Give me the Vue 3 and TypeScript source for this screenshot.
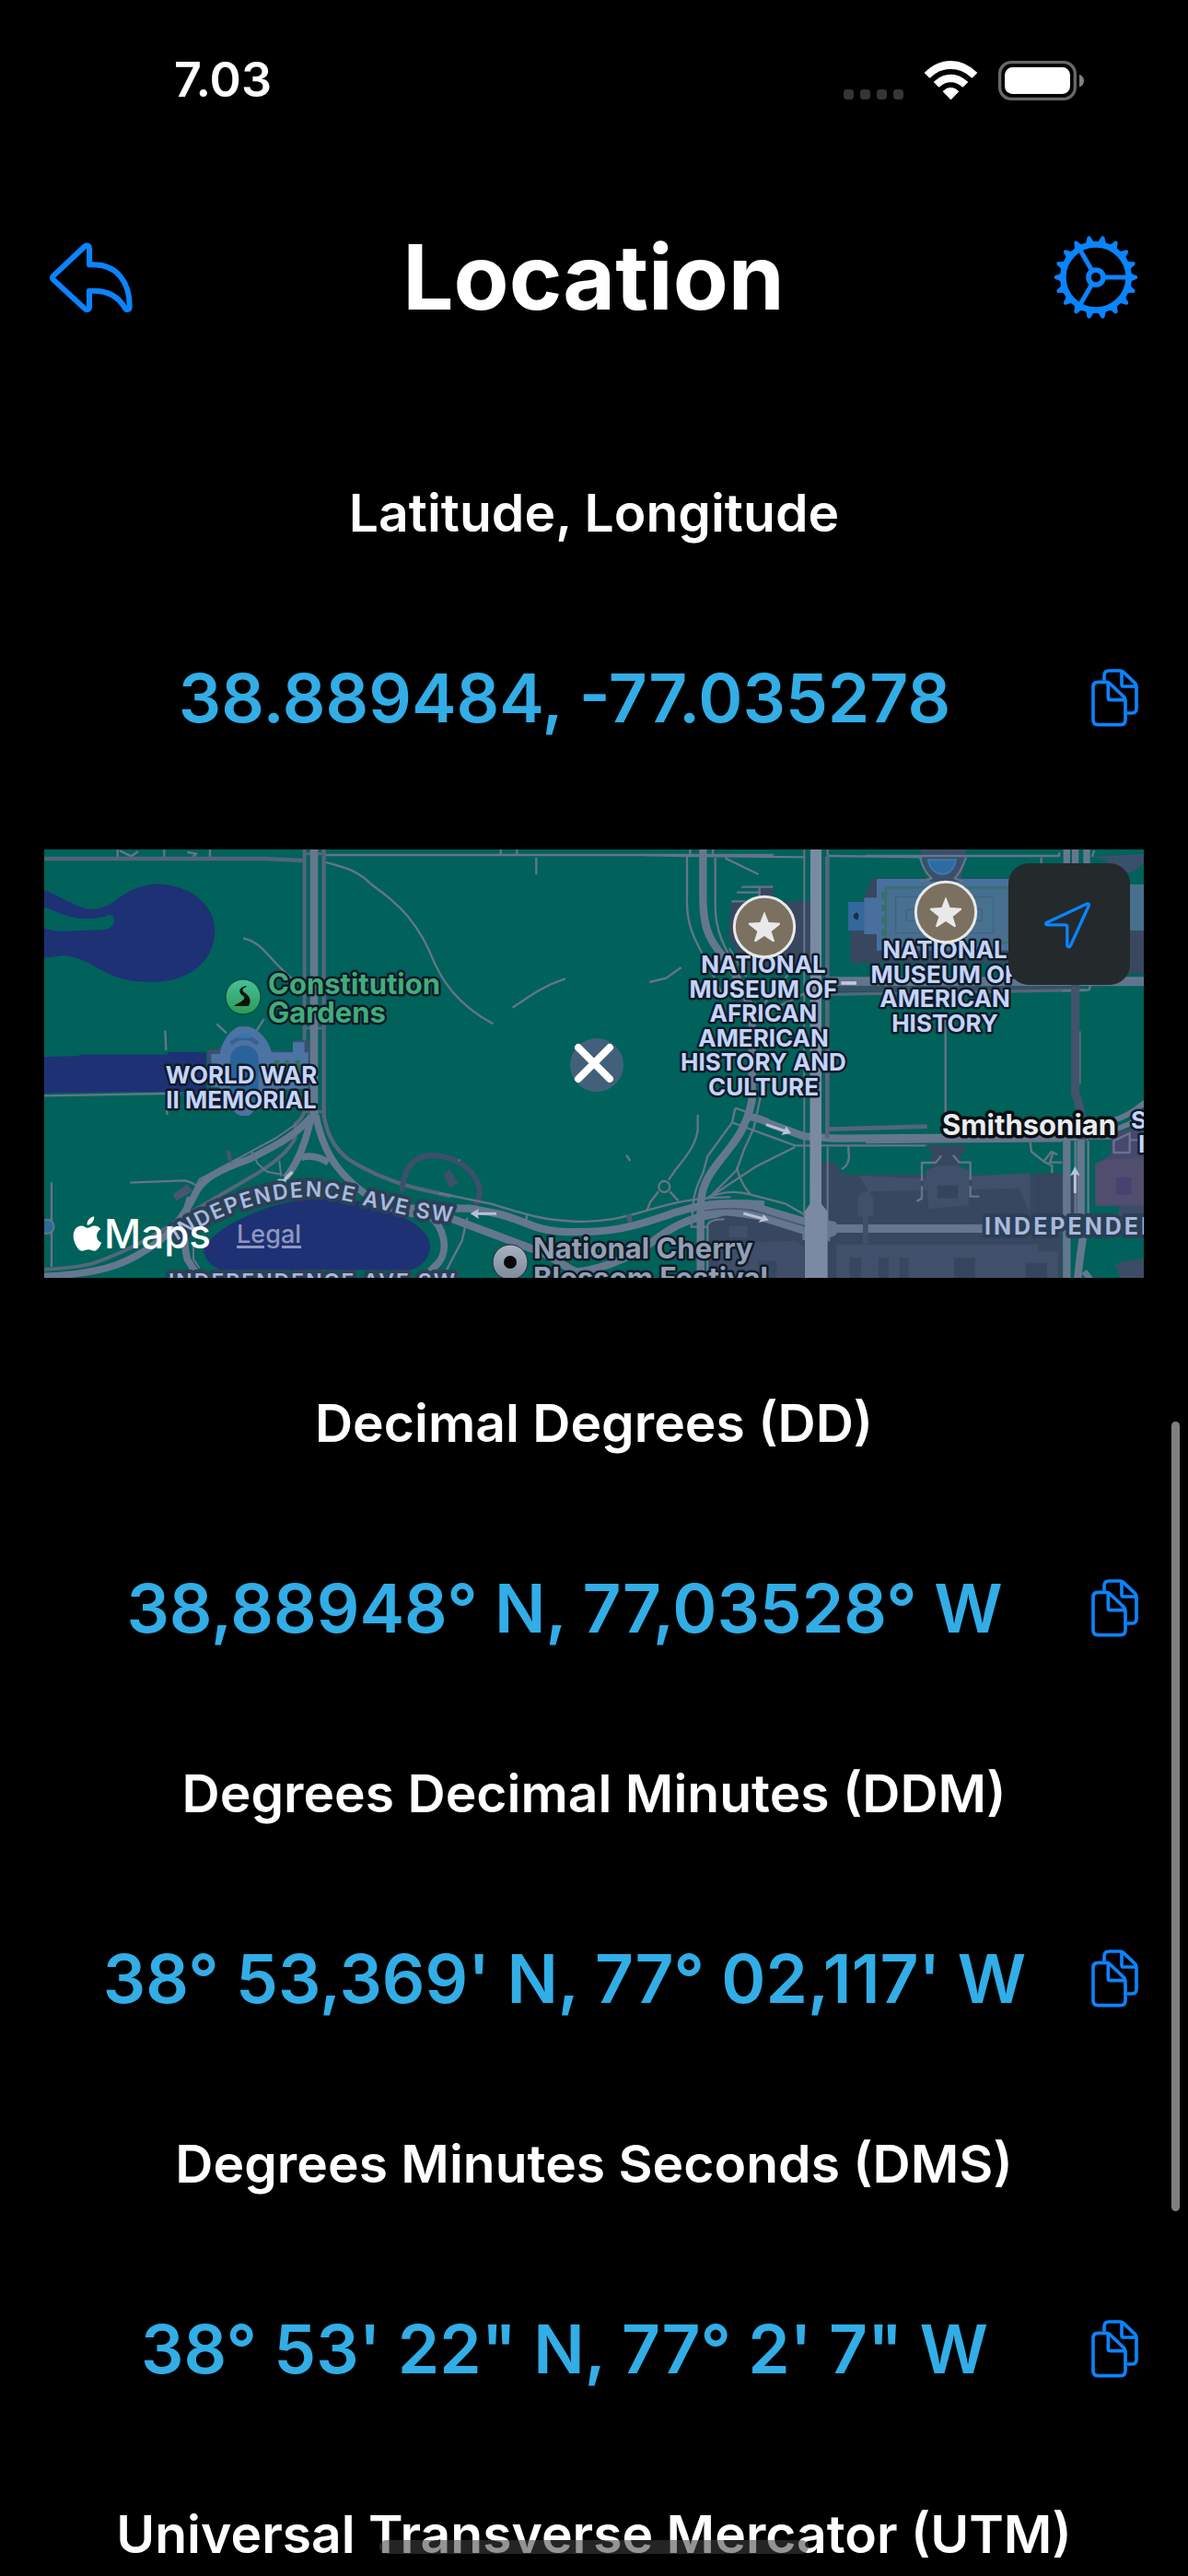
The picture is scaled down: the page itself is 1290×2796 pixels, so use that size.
<script setup lang="ts">
interface Coordinate {
  title: string
  value: string
}

const latLong: Coordinate = { title: 'Latitude, Longitude', value: '38.889484, -77.035278' }

const formats: Coordinate[] = [
  { title: 'Decimal Degrees (DD)', value: '38,88948° N, 77,03528° W' },
  { title: 'Degrees Decimal Minutes (DDM)', value: "38° 53,369' N, 77° 02,117' W" },
  { title: 'Degrees Minutes Seconds (DMS)', value: '38° 53\' 22" N, 77° 2\' 7" W' },
]

const teeth: number[] = Array.from({ length: 18 }, (_, i) => i * 20)
const spokes: number[] = [0, 120, 240]

const africanMuseum = ['NATIONAL', 'MUSEUM OF', 'AFRICAN', 'AMERICAN', 'HISTORY AND', 'CULTURE']
const americanMuseum = ['NATIONAL', 'MUSEUM OF', 'AMERICAN', 'HISTORY']
const starPath =
  'M0 -50 L14 -15 L50 -13 Q53 -9 49 -6 L23 15 L33 46 Q31 50 27 48 L0 30 L-27 48 Q-31 50 -33 46 L-23 15 L-49 -6 Q-53 -9 -50 -13 L-14 -15 Z'

function copy(text: string): void {
  navigator.clipboard?.writeText(text)
}
</script>

<template>
  <div class="screen">
    <svg class="defs" aria-hidden="true">
      <symbol id="copy-icon" viewBox="72 75 159 195">
        <g fill="none" stroke="#0a84ff" stroke-width="11" stroke-linejoin="round">
          <path d="M117 116V100Q117 84 133 84H168Q175 84 180 89L217 124Q222 129 222 136V206Q222 222 206 222H192" />
          <path d="M174 86V128Q174 135 181 135H220" />
          <path d="M97 121H124Q131 121 136 126L180 168Q186 174 186 181V244Q186 260 170 260H97Q81 260 81 244V137Q81 121 97 121Z" />
          <path d="M130 123V172Q130 179 137 179H184" />
        </g>
      </symbol>
    </svg>

    <div class="status">
      <span class="time">7.03</span>
      <svg class="status-icons" viewBox="105 39 789 138" aria-hidden="true">
        <g fill="#353535">
          <rect x="108" y="138" width="33" height="33" rx="11" />
          <rect x="162" y="138" width="33" height="33" rx="11" />
          <rect x="216" y="138" width="33" height="33" rx="11" />
          <rect x="270" y="138" width="33" height="33" rx="11" />
        </g>
        <g fill="#fff">
          <path d="M371 84Q409 45 457 45T544 84L529 99Q526 102 523 99Q495 72 457 72T392 99Q389 102 386 99Z" />
          <path d="M401 114Q427 89 457 89T514 114L499 129Q496 132 493 129Q477 115 457 115T422 129Q419 132 416 129Z" />
          <path d="M431 145Q443 132 457 132T484 145L461 169Q457 173 454 169Z" />
        </g>
        <rect x="617" y="50" width="245" height="119" rx="37" fill="none" stroke="#686868" stroke-width="10" />
        <rect x="633" y="66" width="213" height="87" rx="25" fill="#fff" />
        <path d="M876 89Q891 95 891 110T876 130Z" fill="#808080" />
      </svg>
    </div>

    <header class="header">
      <button class="icon-button" aria-label="Back">
        <svg class="header-icon" viewBox="66 72 276 276" aria-hidden="true">
          <path
            d="M81 205L181 111Q189 104 196 109Q198 112 198 116V169H212C287 169 329 225 329 303V308Q328 315 322 315Q317 315 314 310C293 272 259 254 212 254H198V308Q197 314 191 315Q186 315 181 310L81 218Q75 212 81 205Z"
            fill="none" stroke="#0a84ff" stroke-width="18" stroke-linejoin="round"
          />
        </svg>
      </button>
      <h1 class="title">Location</h1>
      <button class="icon-button" aria-label="Settings">
        <svg class="header-icon" viewBox="70 74 276 276" aria-hidden="true">
          <g transform="translate(208 212)" stroke="#0a84ff" fill="none">
            <circle r="107" stroke-width="20" />
            <circle r="24" stroke-width="17" />
            <path v-for="a in spokes" :key="`s${a}`" d="M28 0H104" stroke-width="15" :transform="`rotate(${a})`" />
            <path
              v-for="a in teeth" :key="`t${a}`" d="M112 -16Q120 -9 132 -6Q140 0 132 6Q120 9 112 16Z"
              fill="#0a84ff" stroke="none" :transform="`rotate(${a})`"
            />
          </g>
        </svg>
      </button>
    </header>

    <main class="content">
      <section class="entry">
        <h2 class="entry-title">{{ latLong.title }}</h2>
        <div class="entry-row">
          <p class="value">{{ latLong.value }}</p>
          <button class="copy" :aria-label="`Copy ${latLong.title}`" @click="copy(latLong.value)">
            <svg class="copy-icon" aria-hidden="true"><use href="#copy-icon" /></svg>
          </button>
        </div>
      </section>

      <div class="map">
        <svg class="map-canvas" viewBox="0 0 1194 465" preserveAspectRatio="xMidYMid slice" role="img" aria-label="Map of the National Mall">
          <defs>
            <linearGradient id="park" x1="0" y1="0" x2="0" y2="1">
              <stop offset="0" stop-color="#47c19a" /><stop offset="1" stop-color="#2c9a56" />
            </linearGradient>
            <linearGradient id="event" x1="0" y1="0" x2="0" y2="1">
              <stop offset="0" stop-color="#a9b3c1" /><stop offset="1" stop-color="#7c8899" />
            </linearGradient>
            <path id="avenue" d="M144 425C190 396 236 378 292 377C340 379 380 400 450 405" />
          </defs>
          <rect width="1194" height="465" fill="#00625a" />

          <g transform="translate(-8 -12) scale(.33333)" fill="none" stroke-linejoin="round">
            <!-- water -->
            <g fill="#1e3175">
              <path d="M0 160C90 190 130 230 180 230C260 228 270 160 380 149C500 145 580 220 580 300C578 400 500 468 370 468C210 468 190 390 90 382L0 392V278C30 300 60 302 80 302L225 297C258 290 262 250 236 248C190 270 120 262 90 250L0 214Z" />
              <path d="M0 711L138 709V704H426V695H552V825H290L0 830Z" />
              <path d="M545 1330C590 1270 670 1230 760 1200C860 1170 1000 1160 1100 1195C1220 1235 1280 1280 1281 1330C1280 1370 1250 1395 1220 1405H600C550 1385 540 1350 545 1330Z" />
            </g>

            <!-- north-west paths -->
            <g stroke="#667489" stroke-width="7">
              <path d="M263 36V62M415 36V62M564 36V62M270 40L308 58L330 42M490 45L520 50L508 60" />
              <path d="M940 54H1510L2400 54" />
              <path d="M942 78C1000 95 1040 100 1090 150C1190 220 1240 280 1280 370C1320 470 1370 540 1487 604" />
              <path d="M672 325C740 340 750 390 830 455M418 626L421 690M586 604L618 634M740 588L716 626" />
              <path d="M24 838L410 831H470M424 880V900M304 1121L480 1114Q500 1116 525 1134M48 1120V1395" />
              <path d="M1550 551C1610 510 1650 480 1721 457M1996 468L2050 455L2099 420" />
              <path d="M1511 36V54M1564 36V54M1627 62V117" />
            </g>
            <path d="M0 66H740L868 72" stroke="#53637a" stroke-width="14" />

            <!-- 17th street -->
            <g stroke="#55667b">
              <path d="M872 36V890Q862 915 842 930V975C820 1020 780 1050 720 1090L480 1230C360 1310 280 1350 180 1385Q120 1400 0 1405" stroke-width="12" />
              <path d="M935 36V900C945 970 980 1030 1040 1060C1110 1100 1180 1125 1240 1140L1350 1165" stroke-width="13" />
              <path d="M868 50H940M868 618H940M870 890H940" stroke-width="9" />
            </g>
            <path d="M903 36V905" stroke="#65778e" stroke-width="26" />
            <g stroke="#65778e" stroke-width="23">
              <path d="M895 905C840 970 780 1000 690 1045C590 1080 540 1110 520 1150C490 1210 450 1270 400 1310C320 1370 240 1420 0 1427" />
              <path d="M895 900C880 980 850 1060 810 1105M908 900C930 1010 970 1080 1060 1150C1120 1200 1180 1215 1240 1225" />
              <path d="M860 1040Q900 1025 950 1055M500 1170C480 1220 475 1310 490 1370L515 1410" />
              <path d="M1280 1230C1330 1270 1340 1340 1310 1380L1280 1410" />
            </g>
            <g stroke="#667489" stroke-width="6">
              <path d="M845 930L780 975L530 1110L515 1140M700 1020L720 1060L750 1085L800 1095M790 1050L796 1100M510 1320V1370L530 1400" />
            </g>
            <path d="M785 1115H812M808 1110L832 1086" stroke="#b7c2cf" stroke-width="11" />
            <path d="M616 1012L632 1022L636 1056L622 1046ZM442 1160L490 1126L508 1148L455 1180Z" fill="#465570" />
            <circle cx="33" cy="1264" r="23" fill="#2e6c92" stroke="#667489" stroke-width="6" />

            <!-- war memorial -->
            <path d="M556 688H592L640 625H720L764 690L840 695V658H888V820H720L700 900H650L600 810H556Z" fill="#3a5070" />
            <path d="M568 702H596C605 650 640 615 662 613H690C730 625 755 660 765 697H834V664H872V697H884V815H745C740 860 710 885 690 903H662C625 880 600 850 594 810H568Z" fill="#4c73a3" />
            <rect x="630" y="674" width="92" height="200" rx="45" fill="#29639a" />
            <path d="M632 668Q676 630 720 668" stroke="#3b5f8f" stroke-width="14" />
            <path d="M656 644H694" stroke="#2f79b5" stroke-width="12" />
            <path d="M774 722H790V770H774ZM808 722H822V770H808ZM842 722H858V770H842Z" fill="#2f7358" />
          </g>

          <g transform="translate(352 -12) scale(.33333)" fill="none" stroke-linejoin="round">
            <!-- ellipse and independence avenue, west -->
            <path d="M110 1150C115 1070 150 1032 210 1032C300 1035 365 1100 363 1155Q360 1190 335 1215" stroke="#3c506b" stroke-width="18" />
            <path d="M243 1092L264 1076L292 1122L266 1139Z" fill="#3d5069" />
            <g stroke="#667489" stroke-width="7">
              <path d="M230 1155L400 1190C500 1220 560 1240 640 1245C760 1255 830 1235 920 1208C990 1188 1050 1170 1180 1168" />
              <path d="M518 1222L512 1250M295 1045L297 1050M322 1235L305 1310L255 1405M840 1031L853 1050" />
              <path d="M1073 900V950C1065 1000 1040 1030 1000 1080L978 1112M945 1150L918 1185L908 1210M982 1150L1010 1180" />
              <circle cx="964" cy="1134" r="18" />
            </g>
            <path d="M840 1225H858V1250H845Z" fill="#4b5a71" />
            <g stroke="#65778e">
              <path d="M130 1205H330L420 1222C500 1240 540 1275 620 1280C820 1290 900 1250 1000 1218C1100 1185 1180 1185 1290 1192" stroke-width="25" />
              <path d="M250 1230L530 1335C590 1350 640 1400 680 1412C780 1400 880 1350 930 1310C980 1270 1050 1228 1150 1222H1240" stroke-width="25" />
            </g>
            <path d="M350 1222H417" stroke="#b9bfd6" stroke-width="9" />
            <path d="M332 1222L360 1206L356 1222L360 1239Z" fill="#b9bfd6" />
          </g>

          <g transform="translate(652 -12) scale(.33333)" fill="none" stroke-linejoin="round">
            <!-- museum grounds and southern blocks -->
            <g fill="#37475f">
              <path d="M282 205H375V160H418V205H540V430H330L274 320Z" />
              <path d="M575 1055H620L645 1095H2000V1440H575ZM205 1245L300 1215H400L525 1290V1440H205Z" />
              <path d="M743 130H1400V405H670V290Z" />
            </g>
            <path d="M240 1320L490 1310L520 1330V1440H430V1375H370V1440H240Z" fill="#404e69" />
            <path d="M274 1262H335V1300H274Z" fill="#414f68" />

            <g stroke="#667489" stroke-width="7">
              <path d="M0 54L140 57L520 61M600 57L920 61" />
              <path d="M148 36V54M222 36V60M138 60V190C135 260 150 300 165 330L260 520M230 62V220C230 300 260 360 300 420M262 64L371 117" />
              <path d="M316 158H418M374 160V190M300 176H372M283 205H330M276 358L330 450M330 600L520 505M380 550L470 440" />
              <path d="M520 36V1260M596 36V60M596 1005V1300" stroke-width="6" />
              <path d="M295 878L345 895M295 878L285 925L205 1035L190 1090Q160 1150 158 1190L152 1265H205M285 925L490 1000H920M378 840L355 945L325 1010L300 1080L220 1160" />
              <path d="M490 1005L360 1070L240 1150L205 1170M300 1070Q310 1120 345 1160M210 1168Q280 1140 345 1160L460 1190L520 1225M205 1440V1260Q210 1240 260 1240" />
              <path d="M664 1002V1020Q672 1060 642 1077M887 1182L905 1170" />
            </g>
            <g stroke="#65778e" stroke-width="25">
              <path d="M190 36V190C190 260 200 310 230 350C290 430 345 510 350 600V850Q340 900 325 930C300 1000 220 1060 195 1130Q182 1160 182 1220V1440" />
              <path d="M335 905Q380 912 410 930L520 970L620 977L2000 968" />
              <path d="M180 1205Q260 1180 360 1200L530 1250" />
              <path d="M180 1215Q260 1210 370 1230L530 1280" />
            </g>
            <path d="M195 1212Q270 1200 350 1210L520 1262" stroke="#4b5a70" stroke-width="5" />
            <path d="M595 60V975M600 947L920 938" stroke="#55657a" stroke-width="14" />
            <path d="M600 455H2000" stroke="#65778e" stroke-width="8" />
            <path d="M600 470H2000" stroke="#62748c" stroke-width="22" />
            <path d="M600 490H1400" stroke="#3d4d66" stroke-width="16" />
            <path d="M600 508L1436 494" stroke="#55657a" stroke-width="10" />
            <path d="M540 36H576V1190L596 1215V1440H522V1215L538 1190Z" fill="#7a8aa2" />
            <path d="M596 1245Q625 1245 627 1257H900L2000 1256V1284H627Q620 1300 596 1298Z" fill="#65778e" />
            <path d="M518 1290V1308M600 1290V1312" stroke="#65778e" stroke-width="8" />
            <path d="M640 471H690" stroke="#c3c9da" stroke-width="11" />
            <path d="M396 932L455 952M322 1221L382 1237" stroke="#b9c2d6" stroke-width="9" />
            <path d="M461 937L477 960L445 966L454 953ZM387 1224L404 1243L371 1251L381 1238Z" fill="#b9c2d6" />
            <g fill="#40506a">
              <path d="M698 1098L895 1108L1255 1090V1220L1220 1140L730 1150Z" />
              <path d="M710 1150H735L745 1175V1230H728V1320H711V1230H695V1170Z" />
              <path d="M625 1322H1280V1345H1347V1440H860V1365H830V1440H795V1365H762V1440H705V1365H668V1440H625Z" />
            </g>

            <!-- american history museum -->
            <path d="M664 208H715V193H756V132H1200V365H756V312H715V300H664Z" fill="#486f9d" />
            <rect x="664" y="208" width="51" height="92" fill="#34679c" />
            <rect x="786" y="160" width="400" height="180" fill="#486f91" stroke="#377167" stroke-width="7" />
            <rect x="818" y="190" width="318" height="118" fill="#48708f" stroke="#3f6484" stroke-width="4" />
            <rect x="853" y="232" width="246" height="36" stroke="#3f6484" stroke-width="4" />
            <path d="M777 175V350" stroke="#30725f" stroke-width="9" stroke-dasharray="22 18" />
            <path d="M690 240L698 250L694 266L682 260L680 250Z" fill="#1d2c40" />
          </g>

          <g transform="translate(892 -12) scale(.33333)" fill="none" stroke-linejoin="round">
            <!-- 14th and 12th streets -->
            <path d="M174 30H330L310 140H210Z" fill="#39506c" />
            <path d="M204 70H294C290 100 270 116 250 116S208 100 204 70Z" fill="#2f6ba3" stroke="#4277a6" stroke-width="6" />
            <path d="M735 60L906 50V80L870 110H820L780 70Z" fill="#39506c" />
            <path d="M840 150H910V300H840Z" fill="#47708f" />
            <path d="M855 300H910V440H855Z" fill="#39485f" />
            <g stroke="#667489" stroke-width="7">
              <path d="M0 57H630V46M177 62Q190 110 215 130L176 140M327 62Q310 110 290 130L316 140M572 62V90M738 60Q740 50 745 40" />
              <path d="M260 590V900L264 990M0 990L640 985M536 990L540 1020L580 1052L607 1066V1102M580 1052L605 1020L625 1030M640 1055H600L612 1020M725 985V1230" />
              <path d="M730 475V488Q730 494 720 494L640 496M697 628V800" />
            </g>
            <path d="M192 1000H324V1020L308 1035V1070H215V1020Z" fill="#37475f" />
            <path d="M196 1080L240 1066H300L335 1080V1195L205 1206Z" fill="#40506a" />
            <rect x="233" y="1130" width="67" height="42" fill="#34445c" />
            <path d="M247 1033L228 1056H183V1172L167 1181M284 1031L305 1055H341V1166H370" stroke="#667489" stroke-width="7" />
            <path d="M183 1115V1132M341 1112V1132" stroke="#37475f" stroke-width="9" />
            <path d="M288 1366H356V1440H288ZM521 1382H591V1440H521ZM555 1090H636V1230H555Z" fill="#35455d" />
            <path d="M683 475V830Q700 870 705 930V990" stroke="#43536b" stroke-width="27" />
            <path d="M712 1000V1235H640V1440H906V980H725Z" fill="#00625a" />
            <g stroke="#65778e">
              <path d="M655 36V82M720 36V82M683 36V82" stroke-width="22" />
              <path d="M800 920Q850 910 910 860M800 950Q870 935 910 890" stroke-width="18" />
              <path d="M655 975V1440M701 980V1225L710 1290Q700 1340 690 1440" stroke-width="25" />
              <path d="M683 985V1230M725 985V1220" stroke-width="7" />
            </g>
            <path d="M712 1410L735 1440" stroke="#65778e" stroke-width="20" />
            <path d="M800 960L870 945L910 960V1230H825V1197H748V1060L800 1030Z" fill="#474770" />
            <path d="M748 1060L785 1045L906 1040V1195H748Z" fill="#514d6e" />
            <rect x="815" y="1104" width="51" height="56" fill="#454370" />
            <path d="M808 985L860 960V1023H808ZM860 982H910" stroke="#667489" stroke-width="7" />
            <path d="M826 1198H910V1235H826ZM812 1385L906 1366V1440H832Z" fill="#3c4c66" />
            <path d="M682 1155V1090" stroke="#b9c2d6" stroke-width="9" />
            <path d="M682 1068L698 1099L682 1093L666 1099Z" fill="#b9c2d6" />
          </g>

          <!-- labels -->
          <g class="poi-green label">
            <text x="243" y="157">Constitution</text>
            <text x="243" y="188">Gardens</text>
          </g>
          <g class="poi label" text-anchor="middle">
            <text x="214" y="254">WORLD WAR</text>
            <text x="214" y="281">II MEMORIAL</text>
            <text v-for="(line, i) in africanMuseum" :key="`af${i}`" x="781" :y="134 + Math.round(i * 26.5)">{{ line }}</text>
            <text v-for="(line, i) in americanMuseum" :key="`am${i}`" x="978" :y="118 + Math.round(i * 26.5)">{{ line }}</text>
          </g>
          <g class="poi label">
            <text x="1180" y="303">S</text>
            <text x="1188" y="329">I</text>
          </g>
          <g class="street label">
            <text><textPath href="#avenue">INDEPENDENCE AVE SW</textPath></text>
            <text x="135" y="477">INDEPENDENCE AVE SW</text>
          </g>
          <text class="street street-bold label" x="1021" y="418">INDEPENDENCE</text>
          <g class="event label">
            <text x="531" y="444">National Cherry</text>
            <text x="531" y="476">Blossom Festival</text>
          </g>
          <text class="station label" x="975" y="310">Smithsonian</text>

          <!-- pins -->
          <circle cx="216" cy="160" r="19" fill="url(#park)" stroke="#0b3b35" stroke-width="1" />
          <path d="M219 148C210 150 211 156 216 159C221 163 211 166 206 170H222C226 163 222 158 217 155C214 152 216 150 220 149Z" fill="#08120f" />
          <circle cx="506" cy="448" r="19" fill="url(#event)" stroke="#1d2a36" stroke-width="1" />
          <circle cx="506" cy="448" r="7" fill="#08090c" />
          <g v-for="pin in [{ x: 782, y: 84 }, { x: 979, y: 68 }]" :key="pin.x" :transform="`translate(${pin.x} ${pin.y}) scale(.33333)`">
            <circle r="98" fill="#7c7160" stroke="#e9e9ea" stroke-width="9" />
            <path :d="starPath" fill="#e9e9ea" />
          </g>
          <circle cx="600" cy="234" r="29" fill="#43607a" />
          <path d="M580 215L614 249M614 215L580 249" stroke="#fff" stroke-width="8" stroke-linecap="round" />
        </svg>

        <div class="attribution">
          <svg class="apple" viewBox="118 1222 94 116" aria-hidden="true">
            <path
              d="M186 1225C188 1238 178 1252 164 1253C162 1240 172 1228 186 1225ZM165 1262C172 1262 176 1255 188 1255C197 1255 203 1260 207 1265C189 1277 191 1301 210 1309C204 1323 196 1335 187 1335C179 1335 176 1331 168 1331C159 1331 155 1335 148 1335C136 1335 120 1310 120 1287C120 1266 133 1255 146 1255C154 1255 160 1262 165 1262Z"
              fill="#fff"
            />
          </svg>
          <span class="brand">Maps</span>
          <a class="legal" href="#legal">Legal</a>
        </div>

        <button class="locate" aria-label="Centre on my location">
          <svg class="locate-icon" viewBox="587 206 152 152" aria-hidden="true">
            <path
              d="M588 276L719 215Q726 213 725 221L666 350Q663 356 658 354Q655 353 655 349V290Q655 283 648 283H592Q586 283 586 280T588 276Z"
              fill="none" stroke="#0a84ff" stroke-width="10" stroke-linejoin="round"
            />
          </svg>
        </button>
      </div>

      <section v-for="item in formats" :key="item.title" class="entry">
        <h2 class="entry-title">{{ item.title }}</h2>
        <div class="entry-row">
          <p class="value">{{ item.value }}</p>
          <button class="copy" :aria-label="`Copy ${item.title}`" @click="copy(item.value)">
            <svg class="copy-icon" aria-hidden="true"><use href="#copy-icon" /></svg>
          </button>
        </div>
      </section>

      <section class="entry">
        <h2 class="entry-title">Universal Transverse Mercator (UTM)</h2>
      </section>
    </main>

    <div class="scroll-thumb"></div>
    <div class="home-indicator"></div>
  </div>
</template>

<style>
body {
  background: #000;
}
</style>

<style scoped>
.screen {
  position: relative;
  display: flex;
  flex-direction: column;
  height: 100vh;
  overflow: hidden;
  background: #000;
  color: #fff;
  font-family: Inter, "Liberation Sans", sans-serif;
}

.defs {
  position: absolute;
  width: 0;
  height: 0;
}

.status {
  display: flex;
  flex: none;
  align-items: center;
  justify-content: space-between;
  height: 174px;
  padding: 0 112px 0 189px;
}

.time {
  font-size: 52px;
  font-weight: 600;
  line-height: 60px;
}

.status-icons {
  width: 263px;
  height: 46px;
}

.header {
  display: flex;
  flex: none;
  align-items: center;
  justify-content: space-between;
  height: 254px;
  padding: 0 54px 0 53px;
}

button {
  display: flex;
  align-items: center;
  justify-content: center;
  margin: 0;
  padding: 0;
  border: 0;
  background: none;
  cursor: pointer;
}

.header-icon {
  display: block;
  width: 92px;
  height: 92px;
}

.title {
  margin: 0;
  font-size: 98px;
  font-weight: 700;
  line-height: 120px;
}

.content {
  flex: 1;
  min-height: 0;
  padding: 28px 48px 0;
  overflow-y: auto;
  scrollbar-width: none;
}

.entry-title,
.entry-row {
  height: 201px;
}

.entry-title {
  margin: 0;
  font-size: 57px;
  font-weight: 600;
  line-height: 201px;
  text-align: center;
  white-space: nowrap;
}

.entry-row {
  display: flex;
  align-items: center;
}

.value {
  flex: 1;
  margin: 0;
  color: #32ade6;
  font-size: 73px;
  font-weight: 600;
  line-height: 90px;
  text-align: center;
  white-space: nowrap;
}

.copy {
  flex: none;
  width: 64px;
  height: 96px;
}

.copy-icon {
  width: 53px;
  height: 65px;
}

.map {
  position: relative;
  height: 465px;
  margin: 64px 0 57px;
  overflow: hidden;
}

.map-canvas {
  display: block;
  width: 100%;
  height: 100%;
}

.label {
  paint-order: stroke;
  stroke: #101a28;
  stroke-width: 5px;
  stroke-linejoin: round;
  font-weight: 600;
}

.poi {
  fill: #c3d4fb;
  font-size: 26px;
}

.poi-green {
  fill: #3fae7a;
  font-size: 31px;
}

.event {
  fill: #93a0b3;
  font-size: 31px;
}

.station {
  fill: #e9ecf0;
  stroke: #0b0e12;
  stroke-width: 7px;
  font-size: 31px;
}

.poi,
.poi-green,
.event,
.station {
  font-weight: 700;
}

.street {
  fill: #a9b9dd;
  stroke: #2b3f57;
  stroke-width: 8px;
  font-size: 23px;
  font-weight: 600;
  letter-spacing: 2px;
}

.street-bold {
  font-size: 25px;
  font-weight: 700;
  letter-spacing: 3px;
}

.attribution {
  position: absolute;
  bottom: 18px;
  left: 31px;
  display: flex;
  align-items: center;
}

.apple {
  width: 32px;
  height: 40px;
}

.brand {
  margin-left: 2px;
  font-size: 44px;
  font-weight: 500;
  line-height: 60px;
}

.legal {
  margin-left: 28px;
  color: #8f97bd;
  font-size: 27px;
  font-weight: 500;
  text-decoration: underline;
  text-decoration-thickness: 3px;
  text-underline-offset: 3px;
}

.locate {
  position: absolute;
  top: 15px;
  right: 15px;
  width: 132px;
  height: 132px;
  border-radius: 22px;
  background: #24292c;
}

.locate-icon {
  width: 51px;
  height: 51px;
  overflow: visible;
}

.scroll-thumb {
  position: absolute;
  top: 1543px;
  right: 9px;
  width: 9px;
  height: 857px;
  border-radius: 5px;
  background: #808080;
}

.home-indicator {
  position: absolute;
  bottom: 24px;
  left: 50%;
  width: 466px;
  height: 15px;
  border-radius: 8px;
  background: rgba(64, 64, 64, 0.56);
  transform: translateX(-50%);
}
</style>
